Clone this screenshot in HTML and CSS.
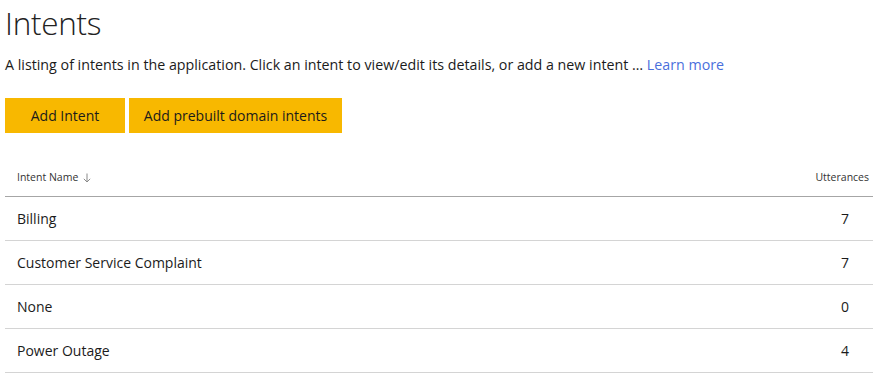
FILE: index.html
```html
<!DOCTYPE html>
<html>
<head>
<meta charset="utf-8">
<link rel="stylesheet" href="styles.css">
</head>
<body>
<div class="page">
  <h1 class="title">Intents</h1>
  <p class="desc">A listing of intents in the application. Click an intent to view/edit its details, or add a new intent … <a class="link" href="#">Learn more</a></p>
  <div class="actions">
    <button class="btn btn-add">Add Intent</button>
    <button class="btn btn-prebuilt">Add prebuilt domain intents</button>
  </div>
  <div class="table">
    <div class="thead">
      <div class="col-name">Intent Name <svg class="sort" width="8" height="10" viewBox="0 0 8 10"><path d="M4 0.5V9M0.8 5.8L4 9L7.2 5.8" fill="none" stroke="#8a8a8a" stroke-width="1"/></svg></div>
      <div class="col-count">Utterances</div>
    </div>
    <div class="row"><div class="col-name">Billing</div><div class="col-count">7</div></div>
    <div class="row"><div class="col-name">Customer Service Complaint</div><div class="col-count">7</div></div>
    <div class="row"><div class="col-name">None</div><div class="col-count">0</div></div>
    <div class="row"><div class="col-name">Power Outage</div><div class="col-count">4</div></div>
  </div>
</div>
</body>
</html>
```

FILE: styles.css
```css
* { box-sizing: border-box; }
html, body { margin: 0; padding: 0; background: #fff; }
body {
  font-family: "Open Sans", "Noto Sans", "Liberation Sans", sans-serif;
  color: #1b1b1b;
}
.page {
  padding: 0 0 0 5px;
}
.title {
  margin: 0;
  padding-top: 2px;
  font-size: 31.5px;
  font-weight: 300;
  line-height: 42px;
  color: #222;
  letter-spacing: -0.3px;
}
.desc {
  margin: 0;
  margin-top: 11px;
  font-size: 14.25px;
  line-height: 20px;
  color: #1b1b1b;
}
.link {
  color: #4a6fdc;
  text-decoration: none;
}
.actions {
  display: flex;
  gap: 4px;
  margin-top: 23px;
}
.btn {
  height: 35px;
  border: none;
  background: #f8b800;
  color: #1b1b1b;
  font-family: inherit;
  font-size: 14px;
  padding: 0;
  cursor: pointer;
}
.btn-add { width: 120px; }
.btn-prebuilt { width: 213px; }
.table {
  margin-top: 28px;
}
.thead, .row {
  display: flex;
  justify-content: space-between;
  align-items: center;
}
.thead {
  height: 36px;
  padding-bottom: 3px;
  border-bottom: 1px solid #a6a6a6;
  font-size: 10.5px;
  color: #333;
}
.thead .col-name {
  padding-left: 12px;
  display: flex;
  align-items: center;
}
.thead .col-count { padding-right: 4px; }
.sort { margin-left: 5px; margin-top: 1px; }
.row {
  height: 44px;
  border-bottom: 1px solid #d4d4d4;
  font-size: 14px;
}
.row .col-name { padding-left: 12px; }
.row .col-count { padding-right: 24px; }
```
